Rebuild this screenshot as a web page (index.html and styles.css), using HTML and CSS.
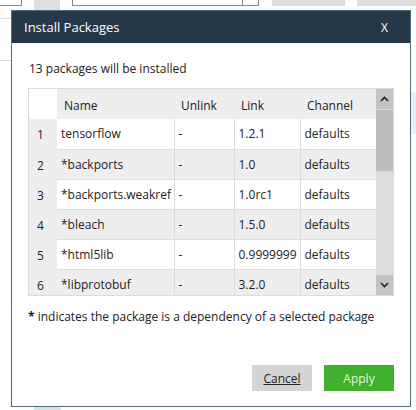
FILE: index.html
```html
<!DOCTYPE html>
<html>
<head>
<meta charset="utf-8">
<link rel="stylesheet" href="styles.css">
</head>
<body>
<div class="page">
  <div class="topbar">
    <div class="tb-box1"></div>
    <div class="tb-gray1"></div>
    <div class="tb-box2"><div class="tb-box2-end"></div></div>
    <div class="tb-gray2"></div>
    <div class="tb-gray3"></div>
  </div>
  <div class="side-lines"></div>
  <div class="right-block"></div>
  <div class="bottom-gray"></div>
</div>

<div class="dialog">
  <div class="dialog-header">
    <span class="dialog-title">Install Packages</span>
    <span class="dialog-close">X</span>
  </div>
  <div class="dialog-body">
    <div class="message">13 packages will be installed</div>
    <div class="grid">
      <div class="grid-view">
        <table class="pkg-table">
          <colgroup>
            <col class="c-num"><col class="c-name"><col class="c-unlink"><col class="c-link"><col class="c-channel">
          </colgroup>
          <thead>
            <tr><th class="corner"></th><th>Name</th><th>Unlink</th><th>Link</th><th>Channel</th></tr>
          </thead>
          <tbody>
            <tr><td class="num">1</td><td>tensorflow</td><td>-</td><td>1.2.1</td><td>defaults</td></tr>
            <tr><td class="num">2</td><td>*backports</td><td>-</td><td>1.0</td><td>defaults</td></tr>
            <tr><td class="num">3</td><td>*backports.weakref</td><td>-</td><td>1.0rc1</td><td>defaults</td></tr>
            <tr><td class="num">4</td><td>*bleach</td><td>-</td><td>1.5.0</td><td>defaults</td></tr>
            <tr><td class="num">5</td><td>*html5lib</td><td>-</td><td>0.9999999</td><td>defaults</td></tr>
            <tr><td class="num">6</td><td>*libprotobuf</td><td>-</td><td>3.2.0</td><td>defaults</td></tr>
          </tbody>
        </table>
      </div>
      <div class="scrollbar">
        <div class="sb-btn">
          <svg width="9" height="6" viewBox="0 0 9 6"><path d="M1 5 L4.5 1.5 L8 5" fill="none" stroke="#222" stroke-width="1.6"/></svg>
        </div>
        <div class="sb-thumb"></div>
        <div class="sb-track"></div>
        <div class="sb-btn">
          <svg width="9" height="6" viewBox="0 0 9 6"><path d="M1 1 L4.5 4.5 L8 1" fill="none" stroke="#222" stroke-width="1.6"/></svg>
        </div>
      </div>
    </div>
    <div class="note"><span class="star">*</span> indicates the package is a dependency of a selected package</div>
    <div class="actions">
      <button class="btn btn-cancel">Cancel</button>
      <button class="btn btn-apply">Apply</button>
    </div>
  </div>
</div>
</body>
</html>
```
FILE: styles.css
```css
* { box-sizing: border-box; }
html, body { margin: 0; padding: 0; background: #fff; }
body {
  width: 416px;
  height: 410px;
  overflow: hidden;
  position: relative;
  font-family: "Open Sans", "Noto Sans", sans-serif;
  color: #222;
}

/* background page fragments */
.page { width: 416px; height: 410px; position: relative; }
.topbar { display: flex; align-items: flex-start; height: 10px; }
.tb-box1 { width: 22px; height: 6px; border-right: 1px solid #888; border-bottom: 1px solid #888; }
.tb-gray1 { width: 26px; height: 10px; background: #dedede; margin-left: 12px; }
.tb-box2 { width: 188px; height: 6px; margin-left: 12px; border: 1px solid #888; border-top: none; display: flex; justify-content: flex-end; }
.tb-box2-end { width: 16px; border-left: 1px solid #888; }
.tb-gray2 { width: 73px; height: 6px; background: #dedede; margin-left: 13px; }
.tb-gray3 { width: 59px; height: 6px; background: #dedede; margin-left: 12px; }
.side-lines { width: 11px; height: 43px; margin-top: 8px; border-top: 1px solid #ddd; border-bottom: 1px solid #ddd; }
.right-block { width: 6px; height: 42px; margin-left: 410px; margin-top: 31px; background: #ececec; }
.bottom-gray { width: 27px; height: 4px; margin-left: 34px; margin-top: 272px; background: #dedede; }

/* modal dialog overlays the page */
.dialog {
  position: absolute;
  left: 11px;
  top: 10px;
  width: 400px;
  height: 397px;
  border: 1px solid #4a6f82;
  background: #fff;
  display: flex;
  flex-direction: column;
}
.dialog-header {
  height: 32px;
  background: #263748;
  color: #fff;
  display: flex;
  align-items: center;
  justify-content: space-between;
  padding: 0 22px 0 12px;
  font-size: 13px;
}
.dialog-title { letter-spacing: 0; }
.dialog-close { font-size: 12px; }
.dialog-body {
  flex: 1;
  display: flex;
  flex-direction: column;
  padding: 18px 16px 15px 16px;
}
.message { font-size: 12px; line-height: 16px; padding-left: 1px; }

.grid {
  margin-top: 11px;
  width: 366px;
  height: 208px;
  border: 1px solid #dcdcdc;
  display: flex;
}
.grid-view { width: 347px; height: 206px; overflow: hidden; }
.pkg-table {
  border-collapse: collapse;
  table-layout: fixed;
  width: 347px;
  font-size: 12px;
}
.c-num { width: 28px; }
.c-name { width: 117px; }
.c-unlink { width: 60px; }
.c-link { width: 66px; }
.c-channel { width: 76px; }

.pkg-table th {
  height: 30px;
  background: #eeeeee;
  font-weight: normal;
  text-align: left;
  padding: 2px 0 0 7px;
  white-space: nowrap;
}
.pkg-table th.corner { background: #fff; }
.pkg-table td {
  height: 30px;
  padding: 0 0 0 4px;
  white-space: nowrap;
  overflow: hidden;
  border-bottom: 1px solid #dcdcdc;
  border-right: 1px solid #dcdcdc;
  background: #fff;
}
.pkg-table td:last-child { border-right: none; }
.pkg-table tbody tr:nth-child(even) td { background: #eeeeee; }
.pkg-table td.num {
  background: #eeeeee;
  border-right: none;
  border-bottom-color: #eeeeee;
  padding-left: 8px;
  padding-top: 2px;
}

.scrollbar {
  width: 17px;
  height: 206px;
  background: #dcdcdc;
  display: flex;
  flex-direction: column;
}
.sb-btn {
  height: 20px;
  background: #c3c3c3;
  display: flex;
  align-items: center;
  justify-content: center;
}
.sb-thumb { height: 61px; margin-top: 1px; background: #bcbcbc; }
.sb-track { flex: 1; }

.note {
  margin-top: 13px;
  font-size: 12px;
  line-height: 16px;
}
.star { font-weight: bold; }

.actions {
  margin-top: auto;
  display: flex;
  justify-content: flex-end;
  gap: 12px;
}
.btn {
  height: 26px;
  border: none;
  font-family: inherit;
  font-size: 12px;
  padding: 0;
  cursor: pointer;
}
.btn-cancel {
  width: 60px;
  background: #d4d4d4;
  color: #222;
  text-decoration: underline;
}
.btn-apply {
  width: 70px;
  background: #41b02e;
  color: #e6f5dc;
}
```
